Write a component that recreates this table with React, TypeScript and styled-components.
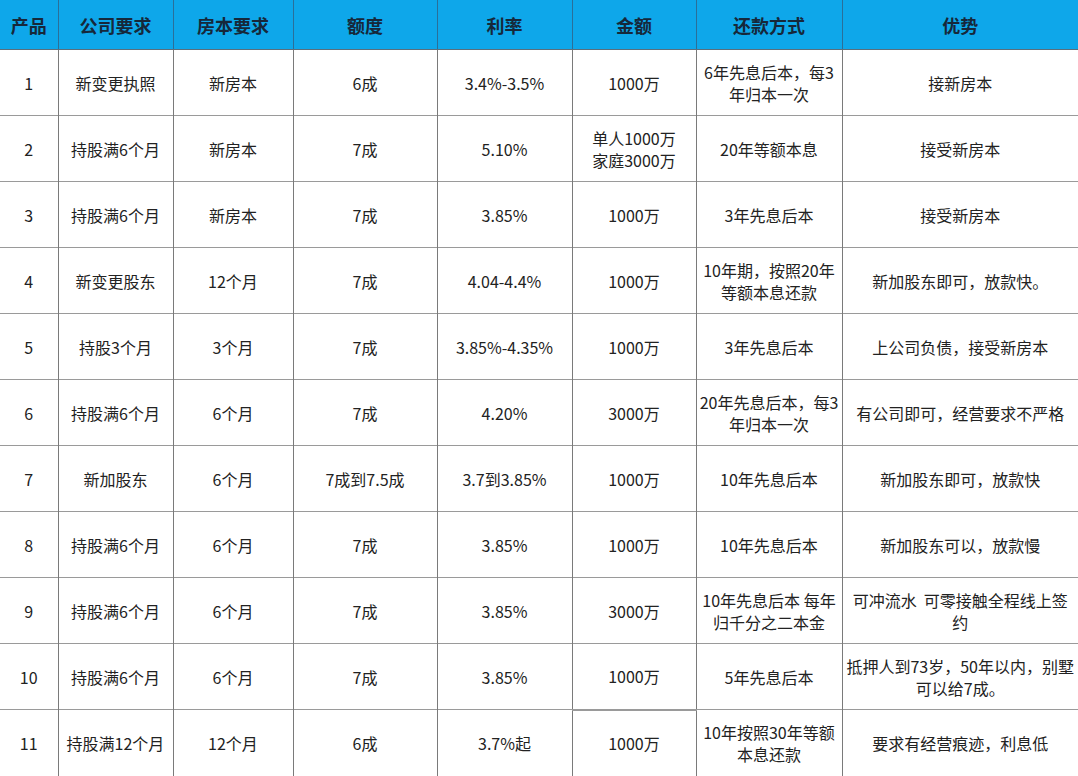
import styled, { createGlobalStyle } from "styled-components";

const GlobalStyle = createGlobalStyle`
  html, body {
    margin: 0;
    padding: 0;
    background: #ffffff;
  }
  body {
    font-family: "Noto Sans CJK SC", "Noto Sans", sans-serif;
  }
`;

const widths = [58, 115, 120, 144, 135, 124, 146, 236];
const headers = ["产品", "公司要求", "房本要求", "额度", "利率", "金额", "还款方式", "优势"];

const rows: string[][] = [
  ["1", "新变更执照", "新房本", "6成", "3.4%-3.5%", "1000万", "6年先息后本，每3\n年归本一次", "接新房本"],
  ["2", "持股满6个月", "新房本", "7成", "5.10%", "单人1000万\n家庭3000万", "20年等额本息", "接受新房本"],
  ["3", "持股满6个月", "新房本", "7成", "3.85%", "1000万", "3年先息后本", "接受新房本"],
  ["4", "新变更股东", "12个月", "7成", "4.04-4.4%", "1000万", "10年期，按照20年\n等额本息还款", "新加股东即可，放款快。"],
  ["5", "持股3个月", "3个月", "7成", "3.85%-4.35%", "1000万", "3年先息后本", "上公司负债，接受新房本"],
  ["6", "持股满6个月", "6个月", "7成", "4.20%", "3000万", "20年先息后本，每3\n年归本一次", "有公司即可，经营要求不严格"],
  ["7", "新加股东", "6个月", "7成到7.5成", "3.7到3.85%", "1000万", "10年先息后本", "新加股东即可，放款快"],
  ["8", "持股满6个月", "6个月", "7成", "3.85%", "1000万", "10年先息后本", "新加股东可以，放款慢"],
  ["9", "持股满6个月", "6个月", "7成", "3.85%", "3000万", "10年先息后本 每年\n归千分之二本金", "可冲流水  可零接触全程线上签\n约"],
  ["10", "持股满6个月", "6个月", "7成", "3.85%", "1000万", "5年先息后本", "抵押人到73岁，50年以内，别墅\n可以给7成。"],
  ["11", "持股满12个月", "12个月", "6成", "3.7%起", "1000万", "10年按照30年等额\n本息还款", "要求有经营痕迹，利息低"],
];

const Table = styled.table`
  width: 1078px;
  border-collapse: collapse;
  table-layout: fixed;
`;

const HeadCell = styled.th`
  height: 49px;
  padding: 0;
  background: #0ea7ea;
  color: #16283a;
  font-size: 18px;
  font-weight: 700;
  text-align: center;
  vertical-align: middle;
  border-left: 1px solid #2a6f99;
  border-bottom: 1px solid #5b6f7c;
  &:first-child {
    border-left: none;
  }
`;

const Row = styled.tr`
  height: 66px;
`;

const Cell = styled.td<{ $thick?: boolean }>`
  padding: 0 2px;
  color: #222222;
  font-size: 16px;
  line-height: 22px;
  text-align: center;
  vertical-align: middle;
  white-space: pre-wrap;
  border-left: 1px solid #7a7a7a;
  border-top: ${(p) => (p.$thick ? "2px solid #9a9a9a" : "1px solid #9a9a9a")};
  &:first-child {
    border-left: none;
  }
`;

export default function App() {
  return (
    <>
      <GlobalStyle />
      <Table>
        <colgroup>
          {widths.map((w, i) => (
            <col key={i} style={{ width: w }} />
          ))}
        </colgroup>
        <thead>
          <tr>
            {headers.map((h) => (
              <HeadCell key={h}>{h}</HeadCell>
            ))}
          </tr>
        </thead>
        <tbody>
          {rows.map((r, ri) => (
            <Row key={ri}>
              {r.map((c, ci) => (
                <Cell key={ci} $thick={ri === 10 && ci === 5}>
                  {c}
                </Cell>
              ))}
            </Row>
          ))}
        </tbody>
      </Table>
    </>
  );
}
